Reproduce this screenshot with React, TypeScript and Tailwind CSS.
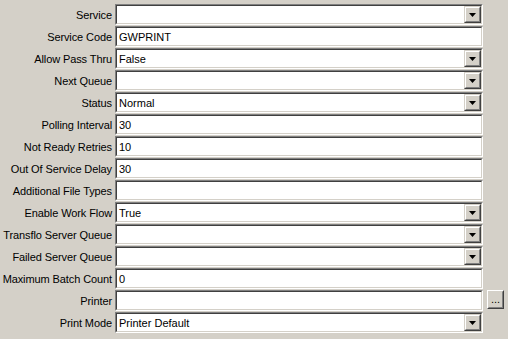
import React from 'react';

type Field = {
  label: string;
  value?: string;
  kind: 'text' | 'select';
  browse?: boolean;
};

const fields: Field[] = [
  { label: 'Service', kind: 'select' },
  { label: 'Service Code', value: 'GWPRINT', kind: 'text' },
  { label: 'Allow Pass Thru', value: 'False', kind: 'select' },
  { label: 'Next Queue', kind: 'select' },
  { label: 'Status', value: 'Normal', kind: 'select' },
  { label: 'Polling Interval', value: '30', kind: 'text' },
  { label: 'Not Ready Retries', value: '10', kind: 'text' },
  { label: 'Out Of Service Delay', value: '30', kind: 'text' },
  { label: 'Additional File Types', kind: 'text' },
  { label: 'Enable Work Flow', value: 'True', kind: 'select' },
  { label: 'Transflo Server Queue', kind: 'select' },
  { label: 'Failed Server Queue', kind: 'select' },
  { label: 'Maximum Batch Count', value: '0', kind: 'text' },
  { label: 'Printer', kind: 'text', browse: true },
  { label: 'Print Mode', value: 'Printer Default', kind: 'select' },
];

// sunken 3D edge like an old Win32 edit control
function Sunken({ children }: { children: React.ReactNode }) {
  return (
    <div className="h-[21px] w-[368px] border border-t-[#808080] border-l-[#808080] border-b-white border-r-white">
      <div className="flex h-full w-full border border-t-[#404040] border-l-[#404040] border-b-[#d4d0c8] border-r-[#d4d0c8] bg-white">
        {children}
      </div>
    </div>
  );
}

function DropButton() {
  return (
    <div className="h-[17px] w-[17px] shrink-0 border border-t-[#d4d0c8] border-l-[#d4d0c8] border-b-[#404040] border-r-[#404040]">
      <div className="flex h-full w-full items-center justify-center border border-t-white border-l-white border-b-[#808080] border-r-[#808080] bg-[#d4d0c8]">
        <svg width="7" height="4" viewBox="0 0 7 4" className="mt-px">
          <path d="M0 0h7L3.5 4z" fill="#000" />
        </svg>
      </div>
    </div>
  );
}

function Row({ field }: { field: Field }) {
  return (
    <div className="flex h-[22px] items-start">
      <div className="flex h-[22px] w-[112px] shrink-0 items-center justify-end whitespace-nowrap text-[11px] tracking-[-0.1px] text-black">
        {field.label}
      </div>
      <div className="ml-[3px]">
        <Sunken>
          <div className="flex flex-1 items-center pl-[2px] pt-px text-[11px] leading-none text-black">
            {field.value ?? ''}
          </div>
          {field.kind === 'select' && <DropButton />}
        </Sunken>
      </div>
      {field.browse && (
        <div className="ml-[4px] h-[19px] w-[17px] border border-t-white border-l-white border-b-[#404040] border-r-[#404040]">
          <div className="flex h-full w-full items-end justify-center border border-t-[#d4d0c8] border-l-[#d4d0c8] border-b-[#808080] border-r-[#808080] bg-[#d4d0c8] pb-[2px] text-[11px] leading-none">
            ...
          </div>
        </div>
      )}
    </div>
  );
}

export default function App() {
  return (
    <div
      className="h-[339px] w-[508px] bg-[#d4d0c8] pt-[4px]"
      style={{ fontFamily: 'Tahoma, "Liberation Sans", Arial, sans-serif' }}
    >
      {fields.map((f) => (
        <Row key={f.label} field={f} />
      ))}
    </div>
  );
}
